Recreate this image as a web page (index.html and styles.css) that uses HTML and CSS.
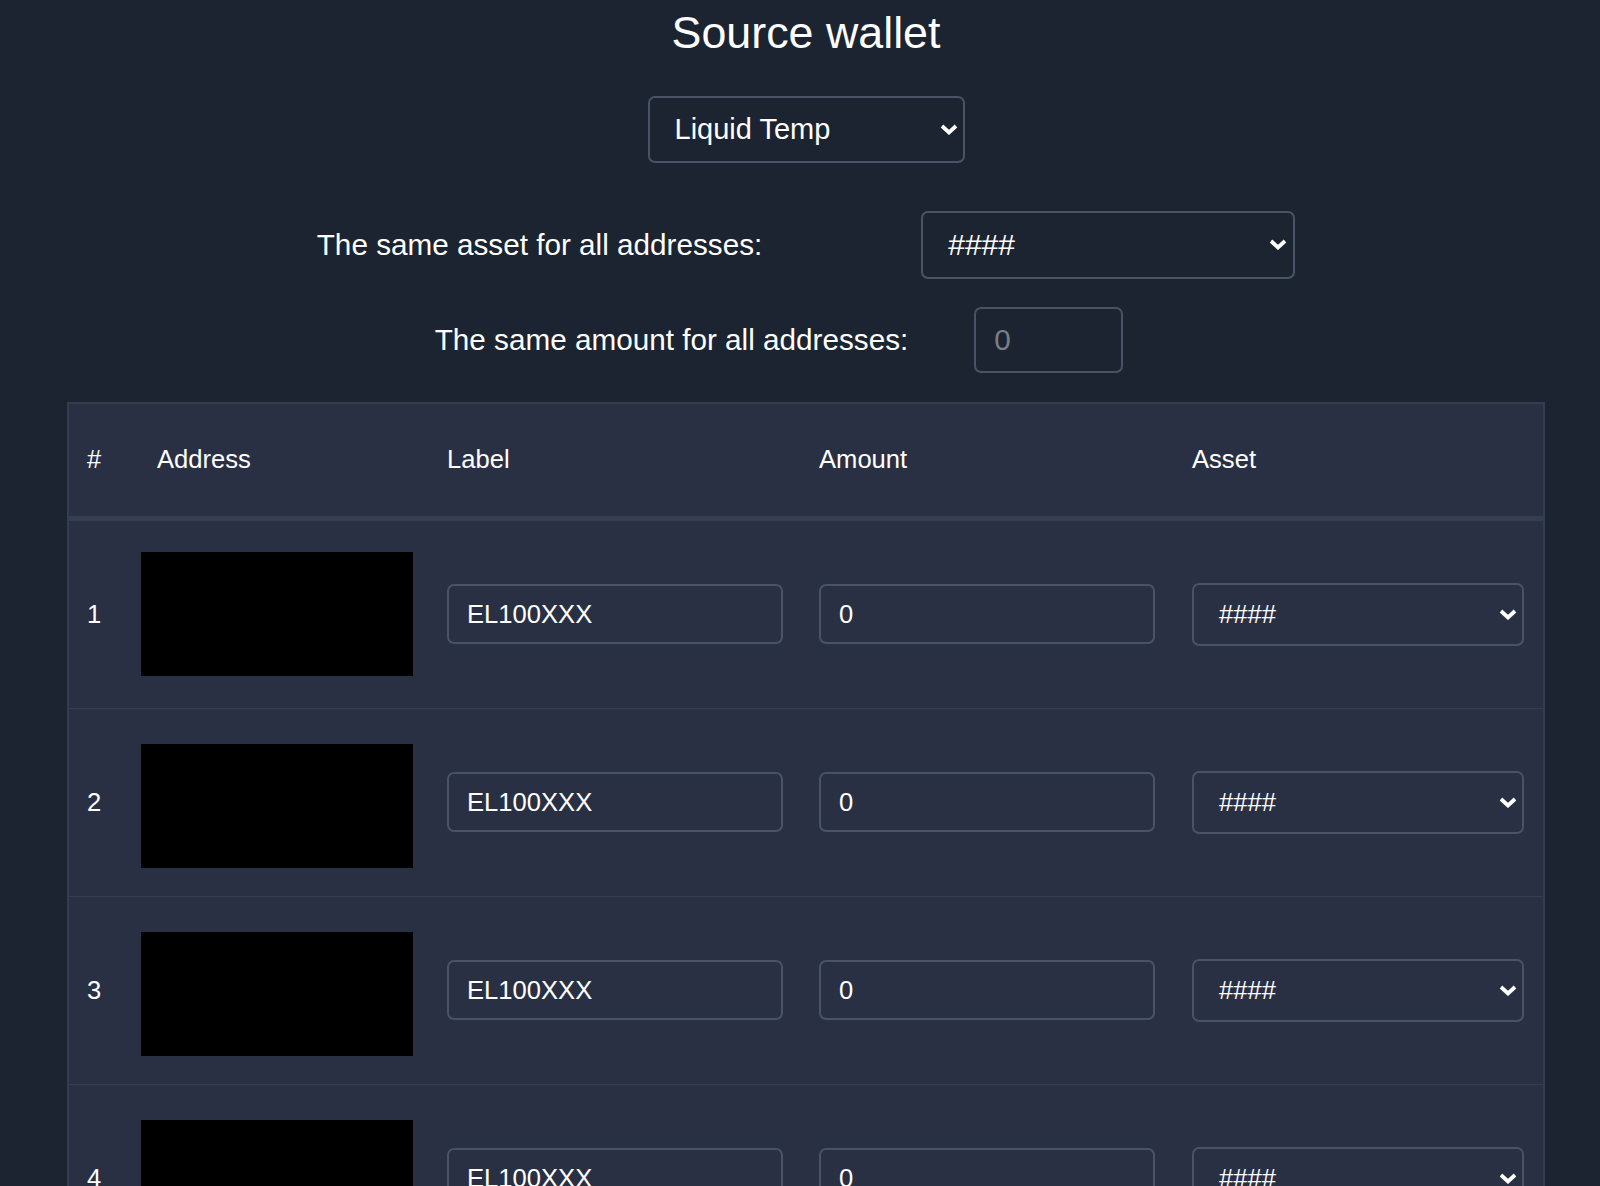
FILE: index.html
```html
<!DOCTYPE html>
<html lang="en">
<head>
<meta charset="utf-8">
<title>Source wallet</title>
<link rel="stylesheet" href="styles.css">
</head>
<body>
<div class="page">
  <h3 class="title">Source wallet</h3>
  <div class="wallet-row">
    <div class="select select-wallet">
      <span>Liquid Temp</span>
      <svg class="chev" viewBox="0 0 18 11" width="18" height="11"><polyline points="2,2 9,8.5 16,2" fill="none" stroke="#fff" stroke-width="3.8"/></svg>
    </div>
  </div>
  <div class="form-row">
    <label class="form-label">The same asset for all addresses:</label>
    <div class="select select-asset">
      <span>####</span>
      <svg class="chev" viewBox="0 0 18 11" width="18" height="11"><polyline points="2,2 9,8.5 16,2" fill="none" stroke="#fff" stroke-width="3.8"/></svg>
    </div>
  </div>
  <div class="form-row form-row-amount">
    <label class="form-label label-amount">The same amount for all addresses:</label>
    <div class="input input-amount"><span class="placeholder">0</span></div>
  </div>

  <table class="tbl">
    <colgroup>
      <col class="c-num"><col class="c-addr"><col class="c-label"><col class="c-amount"><col class="c-asset">
    </colgroup>
    <thead>
      <tr>
        <th class="th-num">#</th>
        <th>Address</th>
        <th>Label</th>
        <th>Amount</th>
        <th>Asset</th>
      </tr>
    </thead>
    <tbody>
      <tr>
        <td class="td-num">1</td>
        <td class="td-addr"><div class="addr-box"></div></td>
        <td class="td-field"><div class="input cell-input">EL100XXX</div></td>
        <td class="td-field"><div class="input cell-input">0</div></td>
        <td class="td-asset"><div class="select cell-select"><span>####</span><svg class="chev" viewBox="0 0 18 11" width="18" height="11"><polyline points="2,2 9,8.5 16,2" fill="none" stroke="#fff" stroke-width="3.8"/></svg></div></td>
      </tr>
      <tr>
        <td class="td-num">2</td>
        <td class="td-addr"><div class="addr-box"></div></td>
        <td class="td-field"><div class="input cell-input">EL100XXX</div></td>
        <td class="td-field"><div class="input cell-input">0</div></td>
        <td class="td-asset"><div class="select cell-select"><span>####</span><svg class="chev" viewBox="0 0 18 11" width="18" height="11"><polyline points="2,2 9,8.5 16,2" fill="none" stroke="#fff" stroke-width="3.8"/></svg></div></td>
      </tr>
      <tr>
        <td class="td-num">3</td>
        <td class="td-addr"><div class="addr-box"></div></td>
        <td class="td-field"><div class="input cell-input">EL100XXX</div></td>
        <td class="td-field"><div class="input cell-input">0</div></td>
        <td class="td-asset"><div class="select cell-select"><span>####</span><svg class="chev" viewBox="0 0 18 11" width="18" height="11"><polyline points="2,2 9,8.5 16,2" fill="none" stroke="#fff" stroke-width="3.8"/></svg></div></td>
      </tr>
      <tr>
        <td class="td-num">4</td>
        <td class="td-addr"><div class="addr-box"></div></td>
        <td class="td-field"><div class="input cell-input">EL100XXX</div></td>
        <td class="td-field"><div class="input cell-input">0</div></td>
        <td class="td-asset"><div class="select cell-select"><span>####</span><svg class="chev" viewBox="0 0 18 11" width="18" height="11"><polyline points="2,2 9,8.5 16,2" fill="none" stroke="#fff" stroke-width="3.8"/></svg></div></td>
      </tr>
      <tr>
        <td class="td-num">5</td>
        <td class="td-addr"><div class="addr-box"></div></td>
        <td class="td-field"><div class="input cell-input">EL100XXX</div></td>
        <td class="td-field"><div class="input cell-input">0</div></td>
        <td class="td-asset"><div class="select cell-select"><span>####</span><svg class="chev" viewBox="0 0 18 11" width="18" height="11"><polyline points="2,2 9,8.5 16,2" fill="none" stroke="#fff" stroke-width="3.8"/></svg></div></td>
      </tr>
    </tbody>
  </table>
</div>
</body>
</html>
```

FILE: styles.css
```css
html, body {
  margin: 0;
  padding: 0;
  background: #1c2431;
}

body {
  font-family: "Liberation Sans", Arial, Helvetica, sans-serif;
  color: #ffffff;
}

.page {
  width: 1478px;
  margin-left: 67px;
  padding-top: 6px;
}

.title {
  margin: 0;
  font-size: 44.8px;
  font-weight: 400;
  line-height: 1.2;
  text-align: center;
}

.wallet-row {
  display: flex;
  justify-content: center;
  margin-top: 36px;
}

.select {
  box-sizing: border-box;
  display: flex;
  align-items: center;
  justify-content: space-between;
  border: 2px solid #485366;
  border-radius: 7px;
  color: #fff;
}

.select-wallet {
  width: 317px;
  height: 67px;
  padding: 0 5px 0 25px;
  font-size: 29px;
}

.form-row {
  display: flex;
  justify-content: center;
  align-items: center;
  margin-top: 48px;
}

.form-row-amount {
  margin-top: 28px;
}

.form-label {
  font-size: 29.7px;
  margin-right: 159px;
}

.label-amount {
  margin-right: 66px;
}

.select-asset {
  width: 374px;
  height: 68px;
  padding: 0 6px 0 25px;
  font-size: 30px;
}

.input {
  box-sizing: border-box;
  display: flex;
  align-items: center;
  border: 2px solid #485366;
  border-radius: 7px;
}

.input-amount {
  width: 149px;
  height: 66px;
  padding-left: 18px;
  margin-right: 54px;
  font-size: 29.7px;
}

.placeholder {
  color: #7a7f87;
}

.tbl {
  margin-top: 29px;
  width: 1478px;
  table-layout: fixed;
  border-collapse: separate;
  border-spacing: 0;
  background: #2a3043;
  border: 2px solid #343d4e;
  font-size: 25.6px;
}

.c-num { width: 68px; }
.c-addr { width: 290px; }
.c-label { width: 372px; }
.c-amount { width: 373px; }
.c-asset { width: 371px; }

.tbl th {
  height: 112px;
  padding: 0 20px;
  text-align: left;
  font-weight: 400;
  vertical-align: middle;
  border-bottom: 5px solid #353f50;
}

.tbl th.th-num {
  padding-left: 18px;
}

.tbl td {
  height: 187px;
  padding: 0 20px;
  vertical-align: middle;
  border-bottom: 1px solid #363f51;
}

.tbl td.td-num {
  padding-left: 18px;
}

.tbl td.td-addr {
  padding-left: 4px;
  padding-right: 0;
}

.addr-box {
  width: 272px;
  height: 124px;
  background: #000;
}

.tbl tr + tr .addr-box {
  margin-top: 7px;
}

.tbl td.td-field {
  padding-right: 17px;
}

.cell-input {
  width: 336px;
  height: 60px;
  padding-left: 18px;
  color: #fff;
  font-size: 25.6px;
}

.tbl td.td-asset {
  padding-right: 18px;
}

.cell-select {
  width: 332px;
  height: 63px;
  padding: 0 5px 0 25px;
  font-size: 25.6px;
}

.chev {
  display: block;
  flex: none;
}
```
